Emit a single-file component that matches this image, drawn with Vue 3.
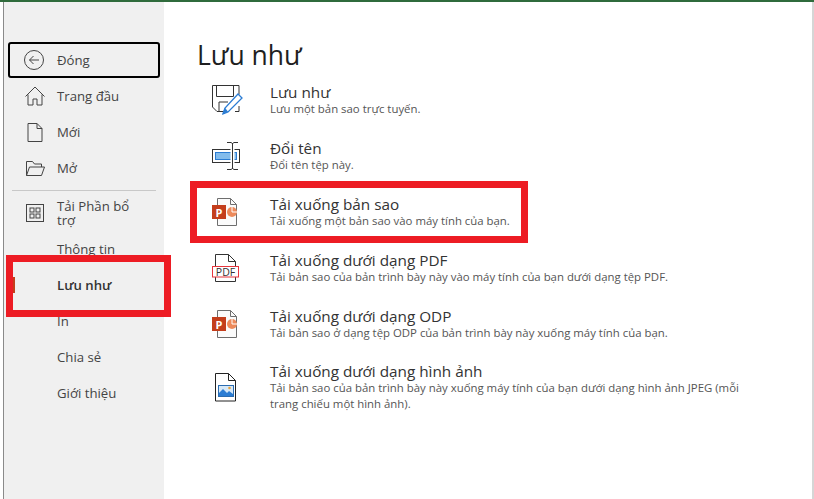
<template>
  <div class="page">
    <aside class="sidebar">
      <button class="nav-item close">
        <span class="nav-icon">
          <svg width="22" height="22" viewBox="0 0 22 22" fill="none" stroke="#444" stroke-width="1">
            <circle cx="11" cy="11" r="9.5" />
            <path d="M16 11H6.500M10.500 7l-4 4 4 4" />
          </svg>
        </span>
        Đóng
      </button>
      <div class="nav-item">
        <span class="nav-icon">
          <svg width="22" height="22" viewBox="0 0 22 22" fill="none" stroke="#444" stroke-width="1">
            <path d="M1.500 11.500 11 2l9.500 9.500M4 9.500V20h5v-6h4v6h5V9.500" />
          </svg>
        </span>
        Trang đầu
      </div>
      <div class="nav-item">
        <span class="nav-icon">
          <svg width="22" height="22" viewBox="0 0 22 22" fill="none" stroke="#444" stroke-width="1">
            <path d="M4 2.500h9l5 5v13H4zM13 2.500v5h5" />
          </svg>
        </span>
        Mới
      </div>
      <div class="nav-item">
        <span class="nav-icon">
          <svg width="22" height="22" viewBox="0 0 22 22" fill="none" stroke="#444" stroke-width="1">
            <path d="M2.500 18.500V4.500h6l2 2.500h7v3M2.500 18.500l3-8.500h15l-3 8.500z" />
          </svg>
        </span>
        Mở
      </div>
      <div class="divider"></div>
      <div class="nav-item">
        <span class="nav-icon">
          <svg width="22" height="22" viewBox="0 0 22 22" fill="none" stroke="#444" stroke-width="1">
            <rect x="2.500" y="2.500" width="17" height="17" />
            <rect x="6" y="6" width="4" height="4" />
            <rect x="12" y="6" width="4" height="4" />
            <rect x="6" y="12" width="4" height="4" />
            <rect x="12" y="12" width="4" height="4" />
          </svg>
        </span>
        <span class="addin">Tải Phần bổ trợ</span>
      </div>
      <div
        v-for="item in menu"
        :key="item"
        class="nav-item"
        :class="{ active: item === 'Lưu như' }"
      >
        <span class="nav-icon"></span>
        {{ item }}
      </div>
    </aside>

    <main class="content">
      <h1>Lưu như</h1>
      <div v-for="row in rows" :key="row.title" class="row" :class="row.type">
        <span class="row-icon">
          <svg v-if="row.type === 'save'" width="36" height="36" viewBox="0 0 36 36" fill="none" stroke="#333" stroke-width="1">
            <path d="M14 29.500H7l-4.500-4.500V3.500h26.500v9M25 29.500h4V24" />
            <path d="M6.500 3.500v11h17v-11M9 29.500V20h9" />
            <path d="M28 12 32 16 18 30 13 32l2-6z" fill="#fff" stroke="#2b7cd3" stroke-width="1.300" />
            <path d="M15 26.500l2.500 3-4.500 2z" fill="#2b7cd3" stroke="#2b7cd3" />
          </svg>
          <svg v-else-if="row.type === 'rename'" width="36" height="36" viewBox="0 0 36 36" fill="none" stroke="#333" stroke-width="1">
            <rect x="2.500" y="11.500" width="27" height="13" />
            <rect x="5.500" y="14.500" width="21" height="7" fill="#83bcec" stroke="#2b7cd3" />
            <path d="M22.500 5v26" stroke="#fff" stroke-width="4" />
            <path d="M22.500 5v26M17 4.500h4l1.500 1 1.500-1h4M17 31.500h4l1.500-1 1.500 1h4" />
          </svg>
          <svg v-else-if="row.type === 'ppt'" width="36" height="36" viewBox="0 0 36 36" fill="none">
            <path d="M7.500 4.500h13l6 6v21h-19z" fill="#fbfbfb" stroke="#6e6e6e" />
            <path d="M20.500 4.500v6h6" stroke="#6e6e6e" />
            <circle cx="22" cy="18" r="5" fill="#ed8a5b" />
            <path d="M22 13v5h5" stroke="#fff" />
            <rect x="2" y="11" width="14" height="14" fill="#c43e1c" />
            <text x="9" y="22.500" text-anchor="middle" class="ppt-letter">P</text>
          </svg>
          <svg v-else-if="row.type === 'pdf'" width="36" height="36" viewBox="0 0 36 36" fill="none" stroke="#333" stroke-width="1">
            <path d="M5.500 16V4.500h13l7 7V16M5.500 27v4.500h20V27M18.500 4.500v7h7" />
            <rect x="2.500" y="16.500" width="26" height="10.500" stroke="#e8353d" fill="#fff" />
            <text x="15.500" y="25.800" text-anchor="middle" class="pdf-letters">PDF</text>
          </svg>
          <svg v-else width="36" height="36" viewBox="0 0 36 36" fill="none" stroke="#222" stroke-width="1">
            <path d="M5.500 4.500h13l7 7v20.500h-20zM18.500 4.500v7h7" />
            <rect x="8.500" y="16.500" width="15" height="11" fill="#d6e8f7" stroke="#2b6cb0" />
            <path d="M9 27v-3l4-4 4 4 2-2 4 3v2z" fill="#2b7cd3" stroke="none" />
            <circle cx="19.500" cy="19" r="1.300" fill="#e8a33d" stroke="none" />
          </svg>
        </span>
        <div class="row-text">
          <div class="row-title">{{ row.title }}</div>
          <div class="row-desc">{{ row.desc }}</div>
        </div>
      </div>
    </main>

    <div class="mark mark-nav"></div>
    <div class="mark mark-row"></div>
  </div>
</template>

<script setup>
const menu = ['Thông tin', 'Lưu như', 'In', 'Chia sẻ', 'Giới thiệu']

const rows = [
  { type: 'save', title: 'Lưu như', desc: 'Lưu một bản sao trực tuyến.' },
  { type: 'rename', title: 'Đổi tên', desc: 'Đổi tên tệp này.' },
  { type: 'ppt', title: 'Tải xuống bản sao', desc: 'Tải xuống một bản sao vào máy tính của bạn.' },
  { type: 'pdf', title: 'Tải xuống dưới dạng PDF', desc: 'Tải bản sao của bản trình bày này vào máy tính của bạn dưới dạng tệp PDF.' },
  { type: 'ppt', title: 'Tải xuống dưới dạng ODP', desc: 'Tải bản sao ở dạng tệp ODP của bản trình bày này xuống máy tính của bạn.' },
  { type: 'image', title: 'Tải xuống dưới dạng hình ảnh', desc: 'Tải bản sao của bản trình bày này xuống máy tính của bạn dưới dạng hình ảnh JPEG (mỗi trang chiếu một hình ảnh).' }
]
</script>

<style>
html, body {
  margin: 0;
  background: #fff;
}
</style>

<style scoped>
.page {
  position: relative;
  display: flex;
  width: 814px;
  height: 499px;
  padding-left: 3px;
  box-sizing: border-box;
  border-top: 2px solid #2f6b3c;
  overflow: hidden;
  font-family: "Open Sans", "Noto Sans", sans-serif;
  background: #fff;
}

.sidebar {
  width: 161px;
  flex: none;
  padding-top: 40px;
  box-sizing: border-box;
  background: #f0f0f0;
  border-left: 1px solid #8a8a8a;
}

.nav-item {
  position: relative;
  display: flex;
  align-items: center;
  height: 36px;
  font-size: 13.2px;
  color: #444;
}

.nav-icon {
  display: flex;
  width: 53px;
  flex: none;
  padding-left: 20px;
  box-sizing: border-box;
}

.nav-item.close {
  width: 152px;
  margin-left: 4px;
  padding: 0;
  border: 2px solid #000;
  border-radius: 3px;
  box-sizing: border-box;
  background: #f0f0f0;
  font-family: inherit;
}

.close .nav-icon {
  width: 47px;
  padding-left: 13px;
}

.divider {
  height: 1px;
  margin: 4px 8px;
  background: #c8c8c8;
}

.addin {
  width: 90px;
  line-height: 14px;
}

.active {
  font-weight: 600;
  color: #333;
}

.active::before {
  content: "";
  position: absolute;
  left: 9px;
  top: 10px;
  width: 2px;
  height: 16px;
  background: #c43e1c;
}

.content {
  flex: 1;
  padding-left: 34px;
  border-right: 2px solid #d6d6d6;
}

h1 {
  margin: 0 0 0 -1px;
  height: 70px;
  padding-top: 35px;
  box-sizing: border-box;
  font-size: 26.5px;
  font-weight: 400;
  line-height: 36px;
  color: #1f1f1f;
}

.row {
  display: flex;
  align-items: center;
  height: 56px;
}

.row.image {
  height: 70px;
}

.row-icon {
  display: flex;
  width: 36px;
  flex: none;
  margin-left: 12px;
  margin-right: 24px;
}

.row-text {
  width: 490px;
}

.row-title {
  font-size: 15.3px;
  line-height: 17px;
  color: #333;
}

.row-desc {
  font-size: 11.4px;
  line-height: 16px;
  color: #555;
}

.ppt-letter {
  font-family: "Open Sans", sans-serif;
  font-size: 11px;
  font-weight: 700;
  fill: #fff;
}

.pdf-letters {
  font-family: "Open Sans", sans-serif;
  font-size: 10.5px;
  fill: #333;
  stroke: none;
}

.mark {
  position: absolute;
  border: 7px solid #ed1c24;
  box-sizing: border-box;
}

.mark-nav {
  left: 6px;
  top: 253px;
  width: 165px;
  height: 62px;
}

.mark-row {
  left: 190px;
  top: 179px;
  width: 338px;
  height: 62px;
}
</style>
